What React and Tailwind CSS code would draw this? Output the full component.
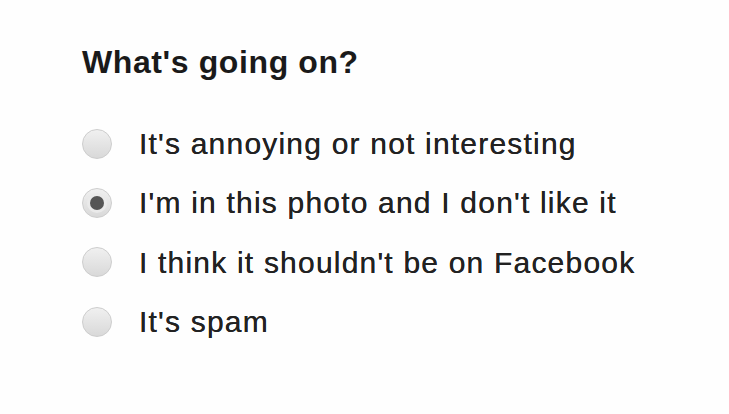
const options = [
  { label: "It's annoying or not interesting", checked: false },
  { label: "I'm in this photo and I don't like it", checked: true },
  { label: "I think it shouldn't be on Facebook", checked: false },
  { label: "It's spam", checked: false },
];

const Radio = ({ checked }) => (
  <span className="relative flex h-[30px] w-[30px] shrink-0 items-center justify-center rounded-full border border-[#cdcdcd] bg-gradient-to-b from-[#f0f0f0] to-[#d9d9d9]">
    {checked && (
      <span className="h-[14px] w-[14px] rounded-full bg-[#555] shadow-[0_0_0_3px_#eaeaea]" />
    )}
  </span>
);

const App = () => {
  return (
    <div
      className="h-[414px] w-[729px] bg-[#fefefe] pl-[82px] pt-[43.6px]"
      style={{ fontFamily: '"Liberation Sans", Arial, sans-serif' }}
    >
      <h1 className="text-[32px] font-bold leading-[36px] tracking-[0.6px] text-[#1a1a1a]">
        What's going on?
      </h1>
      <div className="mt-[34.4px] flex flex-col">
        {options.map((opt) => (
          <label
            key={opt.label}
            className="flex h-[59.3px] items-center gap-[27px]"
          >
            <Radio checked={opt.checked} />
            <span className="text-[30px] leading-[59.3px] tracking-[1.2px] text-[#222] [text-shadow:0_0_0.6px_#222]">
              {opt.label}
            </span>
          </label>
        ))}
      </div>
    </div>
  );
};

export default App;
